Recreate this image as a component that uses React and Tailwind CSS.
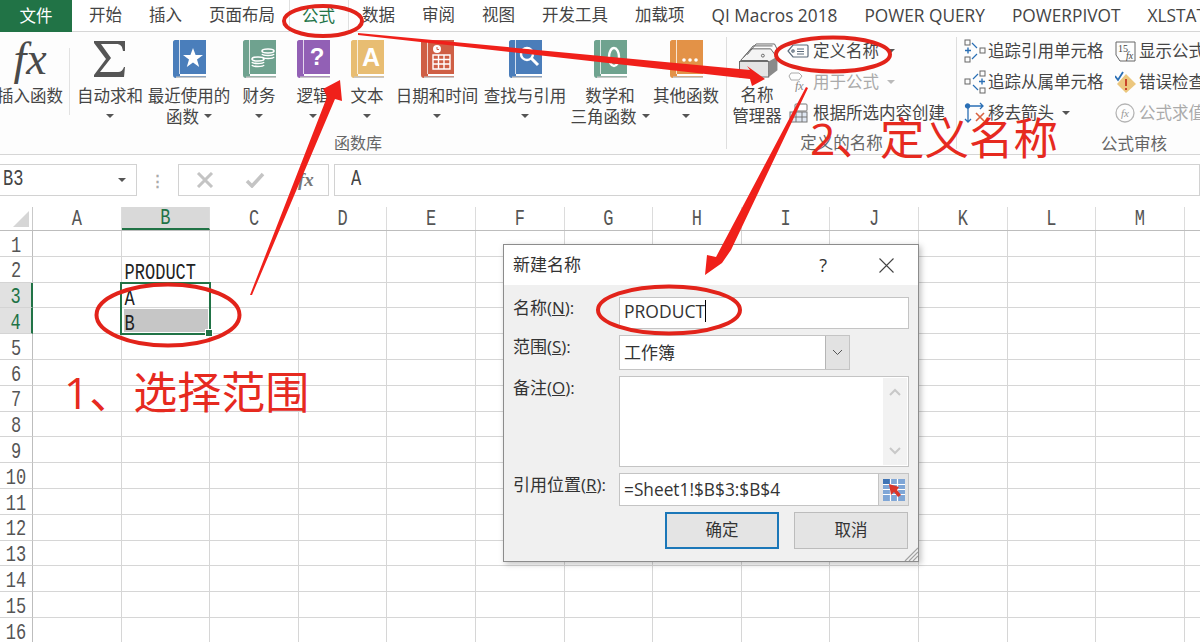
const sans = "font-['Open_Sans','Noto_Sans_CJK_SC',sans-serif]";

const tabs = ["开始", "插入", "页面布局", "公式", "数据", "审阅", "视图", "开发工具", "加载项", "QI Macros 2018", "POWER QUERY", "POWERPIVOT", "XLSTAT"];
const columns = ["A", "B", "C", "D", "E", "F", "G", "H", "I", "J", "K", "L", "M", "N"];
const rows = [1, 2, 3, 4, 5, 6, 7, 8, 9, 10, 11, 12, 13, 14, 15, 16];

const Caret = ({ className = "" }) => (
  <span className={`inline-block w-0 h-0 border-x-[4px] border-x-transparent border-t-[4px] border-t-[#555] ${className}`}></span>
);

// the sheet font in the picture is tall and narrow
const Tall = ({ children }) => <span className="inline-block scale-y-[1.25]">{children}</span>;

const Book = ({ color, children }) => (
  <svg width="33" height="38" viewBox="0 0 33 38">
    <path d="M2 0H33V34H7V36H33V38H3C1 38 0 37 0 35V2C0 1 1 0 2 0Z" fill={color} />
    <rect x="6" y="0" width="1" height="34" fill="#fff" opacity="0.75" />
    <rect x="7" y="34" width="26" height="2" fill="#fff" />
    <rect x="3" y="36.5" width="30" height="1.5" fill="#c8c8c8" />
    {children}
  </svg>
);

const RibbonButton = ({ width, label, second, caret, icon, ml = "" }) => (
  <div className={`flex flex-col items-center shrink-0 pt-[8px] ${width} ${ml}`}>
    <div className="h-[38px] flex items-center justify-center">{icon}</div>
    <div className="mt-[6.5px] leading-[21px] whitespace-nowrap text-center">{label}</div>
    <div className="h-[21px] leading-[21px] whitespace-nowrap flex items-center justify-center gap-[5px]">
      {second && <span>{second}</span>}
      {caret && <Caret />}
    </div>
  </div>
);

const SmallRow = ({ icon, label, gray, caret, iconWidth = "w-[24px]" }) => (
  <div className={`h-[31px] flex items-center whitespace-nowrap ${gray ? "text-[#aaaaaa]" : ""}`}>
    <div className={`${iconWidth} flex items-center shrink-0`}>{icon}</div>
    <span>{label}</span>
    {caret && <Caret className={`ml-[8px] ${gray ? "opacity-40" : ""}`} />}
  </div>
);

const TagIcon = ({ color = "#5b6b7b" }) => (
  <svg width="22" height="14" viewBox="0 0 22 14" fill="none" stroke={color} strokeWidth="1.2" className="-ml-[2px]">
    <path d="M6 1H20C21 1 21 2 21 2V12C21 12 21 13 20 13H6L1 7Z" />
    <circle cx="6" cy="7" r="1.2" />
    <path d="M10 5H17M10 7.5H17M10 10H17" />
  </svg>
);

const TraceIcon = ({ flip }) => (
  <svg width="22" height="24" viewBox="0 0 22 24" fill="none" stroke="#666" strokeWidth="1" style={flip ? { transform: "scaleX(-1)" } : undefined}>
    <rect x="1" y="1" width="5" height="5" />
    <rect x="1" y="18" width="5" height="5" />
    <rect x="16" y="9" width="5" height="5" />
    <path d="M1 11.5H7M4 8.5V14.5" stroke="#2a6fb5" strokeWidth="1.4" />
    <path d="M8 4L13 9M8 20L13 15" stroke="#2a6fb5" strokeWidth="1.2" />
  </svg>
);

const Annotations = () => (
  <svg className="absolute inset-0 pointer-events-none" width="1200" height="642" viewBox="0 0 1200 642" fill="none">
    <ellipse cx="323" cy="21" rx="39" ry="15" stroke="#e2231a" strokeWidth="4" />
    <ellipse cx="833" cy="54.5" rx="57" ry="17" stroke="#e2231a" strokeWidth="4" />
    <ellipse cx="168" cy="315" rx="71.5" ry="30.5" stroke="#e2231a" strokeWidth="4" />
    <ellipse cx="669" cy="310" rx="71" ry="23.5" stroke="#e2231a" strokeWidth="4" />
    <polygon points="250,295 327,97 323,89 340,80 342,101 335,99 252,295" fill="#f0201a" />
    <polygon points="358,33 750,70 747,66 765,79 752,86 750,79 358,35" fill="#f0201a" />
    <polygon points="808,88 731,250 722,263 705,275 707,255 716,257 806,87" fill="#f0201a" />
  </svg>
);

const Ribbon = () => (
  <div className="h-[123px] flex bg-[#fdfdfd] border-b border-[#d6d6d6] overflow-hidden text-[16.5px] text-[#454545]">
    {/* 函数库 */}
    <div className="w-[726px] shrink-0 flex flex-col">
      <div className="flex h-[101px]">
        <RibbonButton
          width="w-[60px]"
          label="插入函数"
          icon={<span className="font-['Liberation_Serif',serif] italic text-[46px] leading-none text-[#4a4a4a]">fx</span>}
        />
        <div className="w-[10px] shrink-0 flex justify-end pt-[16px]"><div className="w-px h-[67px] bg-[#e2e2e2]"></div></div>
        <RibbonButton
          width="w-[80px]"
          label="自动求和"
          caret
          icon={
            <svg width="32" height="36" viewBox="0 0 32 36">
              <path d="M0 0H31V10H29C28 5 27 3 22 3H7L17 17L6 31H24C27 31 29 29 30 26H31L30 36H0V34L12 18L0 2Z" fill="#555" />
            </svg>
          }
        />
        <RibbonButton
          width="w-[78px]"
          label="最近使用的"
          second="函数"
          caret
          icon={
            <Book color="#4a7ebb">
              <polygon points="20,8 22.6,15 30,15 24,19.5 26.2,27 20,22.6 13.8,27 16,19.5 10,15 17.4,15" fill="#fff" />
            </Book>
          }
        />
        <RibbonButton
          width="w-[62px]"
          label="财务"
          caret
          icon={
            <Book color="#6fa28f">
              <g fill="none" stroke="#fff" strokeWidth="1.6">
                <ellipse cx="25" cy="11" rx="6" ry="2" />
                <path d="M19 14C20 16 30 16 31 14M19 17C20 19 30 19 31 17" />
                <ellipse cx="15" cy="19" rx="6" ry="2" />
                <path d="M9 22C10 24 20 24 21 22M9 25C10 27 20 27 21 25" />
              </g>
            </Book>
          }
        />
        <RibbonButton
          width="w-[46px]"
          label="逻辑"
          caret
          icon={
            <Book color="#9260b5">
              <text x="20" y="25" textAnchor="middle" fontSize="24" fontWeight="700" fontFamily="Liberation Sans" fill="#fff">?</text>
            </Book>
          }
        />
        <RibbonButton
          width="w-[62px]"
          label="文本"
          caret
          icon={
            <Book color="#e8bd72">
              <text x="20" y="26" textAnchor="middle" fontSize="25" fontWeight="700" fontFamily="Liberation Sans" fill="#fff">A</text>
            </Book>
          }
        />
        <RibbonButton
          width="w-[78px]"
          label="日期和时间"
          caret
          icon={
            <Book color="#cf5f45">
              <circle cx="16" cy="9" r="4" fill="#fff" />
              <path d="M16 7V9.5H18" stroke="#cf5f45" strokeWidth="1" fill="none" />
              <path d="M12 15H29V29H12ZM12 19.5H29M12 24H29M17.5 15V29M23 15V29" stroke="#fff" strokeWidth="1.4" fill="none" />
            </Book>
          }
        />
        <RibbonButton
          width="w-[98px]"
          label="查找与引用"
          caret
          icon={
            <Book color="#4a7dba">
              <circle cx="18" cy="14" r="6" stroke="#fff" strokeWidth="2.4" fill="none" />
              <path d="M22.5 18.5L29 25" stroke="#fff" strokeWidth="3" />
            </Book>
          }
        />
        <RibbonButton
          width="w-[72px]"
          label="数学和"
          second="三角函数"
          caret
          icon={
            <Book color="#6fa38f">
              <ellipse cx="20" cy="17" rx="5" ry="9" stroke="#fff" strokeWidth="2.4" fill="none" />
            </Book>
          }
        />
        <RibbonButton
          width="w-[80px]"
          label="其他函数"
          caret
          icon={
            <Book color="#e39247">
              <circle cx="14" cy="20" r="1.8" fill="#fff" />
              <circle cx="20" cy="20" r="1.8" fill="#fff" />
              <circle cx="26" cy="20" r="1.8" fill="#fff" />
            </Book>
          }
        />
      </div>
      <div className="h-[20px] leading-[20px] pl-[70px] pr-[80px] text-center text-[16px] text-[#666]">函数库</div>
    </div>

    {/* 定义的名称 */}
    <div className="w-[230px] shrink-0 flex flex-col border-l border-[#dedede] mt-[5px] mb-[5px]">
      <div className="flex h-[96px]">
        <div className="w-[60px] shrink-0 flex flex-col items-center pt-[6px]">
          <svg width="42" height="35" viewBox="0 0 42 36" fill="none" className="ml-[2px]">
            <path d="M3 18L14 6H34L40 14V24L31 30V18Z" fill="#f4f4f4" stroke="#666" strokeWidth="1" />
            <path d="M6 15L16 3H36M10 12L19 1H38L41 7" stroke="#666" strokeWidth="1" />
            <circle cx="26" cy="13" r="1.5" stroke="#666" />
            <rect x="2" y="19" width="30" height="16" fill="#e4e4e4" stroke="#666" />
            <path d="M32 19L41 14V28L32 35Z" fill="#8a8a8a" />
          </svg>
          <div className="mt-[6px] leading-[21px]">名称</div>
          <div className="leading-[21px] whitespace-nowrap">管理器</div>
        </div>
        <div className="ml-[2px] -mt-[1.5px] flex flex-col">
          <SmallRow icon={<TagIcon />} label="定义名称" caret />
          <SmallRow
            label="用于公式"
            gray
            caret
            icon={
              <svg width="20" height="20" viewBox="0 0 20 20" fill="none" className="-ml-[1px]">
                <path d="M3 1H11L14 4L11 8H3L1 4Z" stroke="#aaa" />
                <text x="7" y="18" fontSize="12" fontStyle="italic" fontFamily="Liberation Serif" fill="#888">fx</text>
              </svg>
            }
          />
          <SmallRow
            label="根据所选内容创建"
            icon={
              <svg width="20" height="20" viewBox="0 0 20 20" fill="none" stroke="#777">
                <rect x="6" y="1" width="12" height="7" rx="1" fill="#fff" />
                <rect x="1" y="9" width="17" height="10" fill="#dfe7f2" />
                <path d="M1 14H18M7 9V19M13 9V19" />
              </svg>
            }
          />
        </div>
      </div>
      <div className="h-[20px] leading-[20px] mt-[4px] text-center text-[16.5px] text-[#666]">定义的名称</div>
    </div>

    {/* 公式审核 */}
    <div className="flex-1 flex flex-col border-l border-[#dedede] mt-[5px] mb-[5px] pl-[7px]">
      <div className="flex h-[96px] gap-[10px] -mt-[1.5px]">
        <div className="flex flex-col w-[141px] shrink-0">
          <SmallRow icon={<TraceIcon />} label="追踪引用单元格" iconWidth="w-[24px]" />
          <SmallRow icon={<TraceIcon flip />} label="追踪从属单元格" iconWidth="w-[24px]" />
          <SmallRow
            label="移去箭头"
            caret
            iconWidth="w-[24px]"
            icon={
              <svg width="22" height="22" viewBox="0 0 22 22" fill="none" stroke="#2a6fb5" strokeWidth="1.3">
                <path d="M3 4H19M16 1L19 4L16 7M4 6V20M1 17L4 20L7 17" />
                <circle cx="3.5" cy="4" r="2" fill="#2a6fb5" />
                <path d="M12 11L20 19M20 11L12 19" stroke="#d9623f" strokeWidth="1.6" />
              </svg>
            }
          />
        </div>
        <div className="flex flex-col">
          <SmallRow
            label="显示公式"
            iconWidth="w-[24px]"
            icon={
              <svg width="21" height="21" viewBox="0 0 21 21" fill="none">
                <path d="M1 1H20V20H5" stroke="#666" />
                <path d="M1 1V14L5 20" stroke="#666" />
                <text x="3" y="11" fontSize="10" fontFamily="Liberation Serif" fill="#444">15</text>
                <text x="11" y="18" fontSize="10" fontStyle="italic" fontFamily="Liberation Serif" fill="#444">fx</text>
              </svg>
            }
          />
          <SmallRow
            label="错误检查"
            iconWidth="w-[24px]"
            icon={
              <svg width="21" height="22" viewBox="0 0 21 22" fill="none">
                <path d="M11 3L21 13L11 22L2 13Z" fill="#ecc77e" />
                <path d="M11 8V15M11 17V19" stroke="#c9452a" strokeWidth="2" />
                <path d="M0 5L3 9L8 1" stroke="#2a6fb5" strokeWidth="1.8" />
              </svg>
            }
          />
          <SmallRow
            label="公式求值"
            gray
            iconWidth="w-[24px]"
            icon={
              <svg width="20" height="20" viewBox="0 0 20 20" fill="none">
                <circle cx="10" cy="10" r="9" stroke="#b5b5b5" strokeWidth="1.3" />
                <text x="10" y="14" textAnchor="middle" fontSize="11" fontStyle="italic" fontFamily="Liberation Serif" fill="#999">fx</text>
              </svg>
            }
          />
        </div>
      </div>
      <div className="h-[20px] leading-[20px] mt-[5px] pl-[137px] text-[16.5px] text-[#666]">公式审核</div>
    </div>
  </div>
);

const FormulaBar = () => (
  <div className="h-[42px] pt-[9px] bg-white flex text-[#444]">
    <div className="w-[138px] h-[32px] -ml-px border border-[#d2d2d2] flex items-center justify-between pl-[3px] pr-[10px] font-['Liberation_Mono',monospace] text-[17px]">
      <Tall>B3</Tall>
      <Caret />
    </div>
    <div className="w-[41px] flex items-center justify-center text-[#aaa] text-[15px] font-bold tracking-tight">⋮</div>
    <div className="w-[151px] h-[32px] border border-[#d2d2d2] flex items-center pl-[17px]">
      <svg width="18" height="16" viewBox="0 0 18 16" stroke="#c4c4c4" strokeWidth="3" fill="none"><path d="M2 1L16 15M16 1L2 15" /></svg>
      <svg width="20" height="16" viewBox="0 0 20 16" stroke="#c4c4c4" strokeWidth="3.5" fill="none" className="ml-[31px]"><path d="M2 9L7 14L18 2" /></svg>
      <span className="ml-[33px] font-['Liberation_Serif',serif] italic font-bold text-[19px] text-[#777]">fx</span>
    </div>
    <div className="flex-1 h-[32px] ml-[5px] border border-[#d2d2d2] flex items-center pl-[16px] font-['Liberation_Mono',monospace] text-[17px]"><Tall>A</Tall></div>
  </div>
);

const Sheet = () => (
  <div className="relative font-['Liberation_Mono',monospace] text-[17px] text-[#222]">
    <div className="flex h-[24px] border-b border-[#bdbdbd] bg-white text-[#555]">
      <div className="w-[33px] shrink-0 border-r border-[#c9c9c9] flex items-end justify-end pr-[3px] pb-[3px]">
        <div className="w-0 h-0 border-l-[16px] border-l-transparent border-b-[16px] border-b-[#d6d6d6]"></div>
      </div>
      {columns.map((col) => (
        <div
          key={col}
          className={`w-[88.6px] shrink-0 flex items-center justify-center pt-[3px] border-r border-[#dcdcdc] ${col === "B" ? "bg-[#d9d9d9] text-[#217346] border-b-2 border-b-[#217346]" : ""}`}
        >
          <Tall>{col}</Tall>
        </div>
      ))}
    </div>
    {rows.map((row) => {
      const picked = row === 3 || row === 4;
      return (
        <div key={row} className="flex h-[25.8px]">
          <div className={`w-[33px] shrink-0 flex items-center justify-center pt-[6px] border-r border-b border-b-[#d4d4d4] ${picked ? "bg-[#e1e1e1] text-[#217346] border-r-2 border-r-[#217346]" : "text-[#555] border-r-[#bdbdbd]"}`}>
            <Tall>{row}</Tall>
          </div>
          {columns.map((col) => (
            <div key={col} className="w-[88.6px] shrink-0 border-r border-b border-[#d6d6d6] relative leading-[33px] pl-[3px]">
              {col === "B" && row === 2 && <Tall>PRODUCT</Tall>}
              {col === "B" && row === 3 && <Tall>A</Tall>}
              {col === "B" && row === 4 && (
                <div className="bg-[#c6c6c6] -ml-[1px] mt-[1px] mr-[1px] h-[23px] pl-[1px] leading-[31px]"><Tall>B</Tall></div>
              )}
            </div>
          ))}
        </div>
      );
    })}
    {/* selection box */}
    <div className="absolute left-[120px] top-[75px] w-[91px] h-[53px] border-2 border-[#217346] pointer-events-none">
      <div className="absolute -right-[4px] -bottom-[4px] w-[6px] h-[6px] bg-[#217346] border border-white box-content"></div>
    </div>
  </div>
);

const DialogRow = ({ label, letter, height, labelTop = "", children, mt = "mt-[6px]" }) => (
  <div className={`flex ${mt} ${height}`}>
    <div className={`w-[115px] shrink-0 pl-[9px] leading-[22px] whitespace-nowrap ${labelTop}`}>
      {label}(<span className="underline">{letter}</span>):
    </div>
    {children}
  </div>
);

const Dialog = () => (
  <div className={`absolute left-[503px] top-[244px] w-[416px] h-[318px] bg-[#f0f0f0] border border-[#8c8c8c] shadow-[2px_2px_6px_rgba(0,0,0,0.25)] text-[17px] text-[#333] ${sans}`}>
    <div className="h-[40px] bg-white flex items-center pl-[9px] pr-[24px]">
      <span className="flex-1">新建名称</span>
      <span className="text-[18px] mr-[52px]">?</span>
      <svg width="15" height="15" viewBox="0 0 15 15" stroke="#444" strokeWidth="1.1" fill="none"><path d="M0.5 0.5L14.5 14.5M14.5 0.5L0.5 14.5" /></svg>
    </div>
    <DialogRow label="名称" letter="N" height="h-[32px]" mt="mt-[12px]">
      <div className="w-[290px] border border-[#c4c4c4] bg-white flex items-center pl-[4px] pb-[4px] text-[17.5px]">
        <span>PRODUCT</span><span className="w-px h-[22px] bg-black"></span>
      </div>
    </DialogRow>
    <DialogRow label="范围" letter="S" height="h-[35px]" labelTop="pt-[1px]">
      <div className="w-[231px] border border-[#c4c4c4] bg-white flex items-center justify-between pl-[4px]">
        <span>工作簿</span>
        <div className="w-[24px] h-full bg-[#e2e2e2] border-l border-[#b5b5b5] flex items-center justify-center">
          <svg width="11" height="7" viewBox="0 0 11 7" stroke="#555" fill="none"><path d="M1 1L5.5 5.5L10 1" /></svg>
        </div>
      </div>
    </DialogRow>
    <DialogRow label="备注" letter="O" height="h-[91px]" labelTop="pt-[1px]">
      <div className="w-[290px] border border-[#c4c4c4] bg-white flex justify-end p-[1px]">
        <div className="w-[24px] bg-[#f2f2f2] flex flex-col items-center justify-between py-[10px]">
          <svg width="12" height="8" viewBox="0 0 12 8" stroke="#c8c8c8" strokeWidth="2" fill="none"><path d="M1 7L6 2L11 7" /></svg>
          <svg width="12" height="8" viewBox="0 0 12 8" stroke="#c8c8c8" strokeWidth="2" fill="none"><path d="M1 1L6 6L11 1" /></svg>
        </div>
      </div>
    </DialogRow>
    <DialogRow label="引用位置" letter="R" height="h-[33px]" labelTop="pt-[1px]">
      <div className="w-[290px] border border-[#c4c4c4] bg-white flex items-center justify-between pl-[4px] text-[17.3px]">
        <span>=Sheet1!$B$3:$B$4</span>
        <div className="w-[30px] h-full bg-[#e4e4e4] border-l border-[#c4c4c4] flex items-center justify-center">
          <svg width="22" height="22" viewBox="0 0 22 22">
            <rect x="0" y="0" width="22" height="22" fill="#7fa6d6" />
            <rect x="0" y="0" width="8" height="5" fill="#3f74b5" />
            <path d="M0 5.5H22M0 10.5H22M0 15.5H22M7.5 0V22M14.5 0V22" stroke="#fff" strokeWidth="1.2" />
            <path d="M6 5L16 8L14 11L18 16L15 18L11 13L8 16Z" fill="#d9352a" />
          </svg>
        </div>
      </div>
    </DialogRow>
    <div className="flex justify-end gap-[15px] mt-[6px] pr-[10px] text-[16.5px]">
      <div className="w-[114px] h-[37px] border-2 border-[#1b77b8] bg-[#e4e4e4] flex items-center justify-center">确定</div>
      <div className="w-[114px] h-[37px] border border-[#bcbcbc] bg-[#e4e4e4] flex items-center justify-center">取消</div>
    </div>
    <svg className="absolute right-0 bottom-0" width="14" height="14" viewBox="0 0 14 14" stroke="#a0a0a0" strokeWidth="1.2" fill="none">
      <path d="M1 14L14 1M5 14L14 5M9 14L14 9" />
    </svg>
  </div>
);

export default function App() {
  return (
    <div className={`relative w-[1200px] h-[642px] overflow-hidden bg-white ${sans}`}>
      {/* tab bar */}
      <div className="h-[32px] flex text-[16.5px] text-[#444] whitespace-nowrap">
        <div className="w-[72px] shrink-0 bg-[#217346] text-white flex items-center justify-center">文件</div>
        <div className="flex flex-1 pl-[3.5px] border-b border-[#d6d6d6]">
          {tabs.map((tab) => (
            <div
              key={tab}
              className={`flex items-center shrink-0 ${tab === "公式" ? "px-[12.5px] text-[#217346] border-x border-x-[#e0e0e0] h-[32px] bg-[#fdfdfd]" : "px-[13.5px]"} ${/[A-Z]/.test(tab) ? "text-[17.3px]" : ""}`}
            >
              {tab}
            </div>
          ))}
        </div>
      </div>
      <Ribbon />
      <FormulaBar />
      <div className="h-[10px] bg-white"></div>
      <Sheet />
      <Dialog />
      <Annotations />
      <div className="absolute left-[64px] top-[362px] leading-[60px] text-[44px] text-[#e62a1f] whitespace-nowrap pointer-events-none">1、选择范围</div>
      <div className="absolute left-[810px] top-[108px] leading-[60px] text-[44.5px] text-[#e62a1f] whitespace-nowrap pointer-events-none">2、定义名称</div>
    </div>
  );
}
